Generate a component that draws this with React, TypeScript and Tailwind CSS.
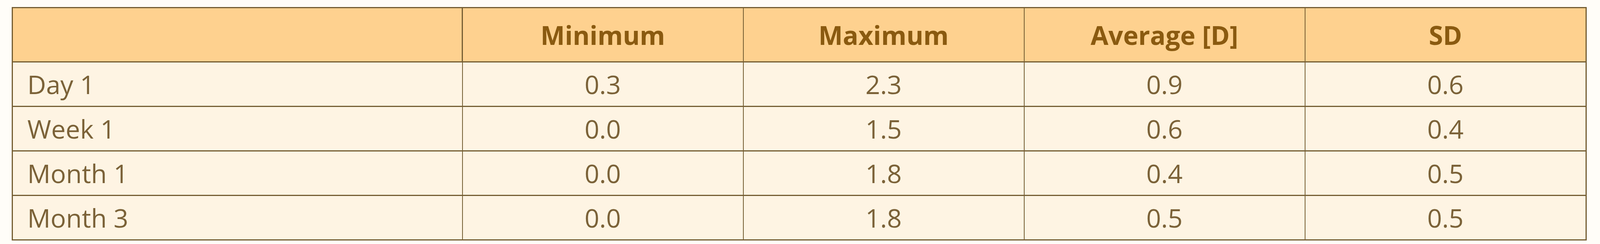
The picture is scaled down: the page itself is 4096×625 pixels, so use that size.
import React from 'react';

const rows = [
  { label: 'Day 1', values: ['0.3', '2.3', '0.9', '0.6'] },
  { label: 'Week 1', values: ['0.0', '1.5', '0.6', '0.4'] },
  { label: 'Month 1', values: ['0.0', '1.8', '0.4', '0.5'] },
  { label: 'Month 3', values: ['0.0', '1.8', '0.5', '0.5'] },
];

const headers = ['Minimum', 'Maximum', 'Average [D]', 'SD'];

export default function App() {
  return (
    <div className="w-[4096px] h-[625px] bg-[#fffdf8] pl-[30px] pt-[18px] font-['Open_Sans',sans-serif]">
      <table className="w-[4029px] border-collapse table-fixed border-[3px] border-[#735d32]">
        <colgroup>
          <col className="w-[1152px]" />
          <col className="w-[719px]" />
          <col className="w-[719px]" />
          <col className="w-[719px]" />
          <col className="w-[720px]" />
        </colgroup>
        <thead>
          <tr className="h-[139px] bg-[#fed18f]">
            <th className="border-[3px] border-[#735d32]" />
            {headers.map((h) => (
              <th
                key={h}
                className="border-x-2 border-y-[3px] border-[#735d32] text-center text-[66px] font-bold text-[#8a5a10]"
              >
                {h}
              </th>
            ))}
          </tr>
        </thead>
        <tbody>
          {rows.map((r) => (
            <tr key={r.label} className="h-[114px] bg-[#fef4e3] text-[66px] text-[#7b6238]">
              <td className="border-x-2 border-y-[3px] border-[#735d32] pl-[37px] text-left">{r.label}</td>
              {r.values.map((v, i) => (
                <td key={i} className="border-x-2 border-y-[3px] border-[#735d32] text-center">
                  {v}
                </td>
              ))}
            </tr>
          ))}
        </tbody>
      </table>
    </div>
  );
}
